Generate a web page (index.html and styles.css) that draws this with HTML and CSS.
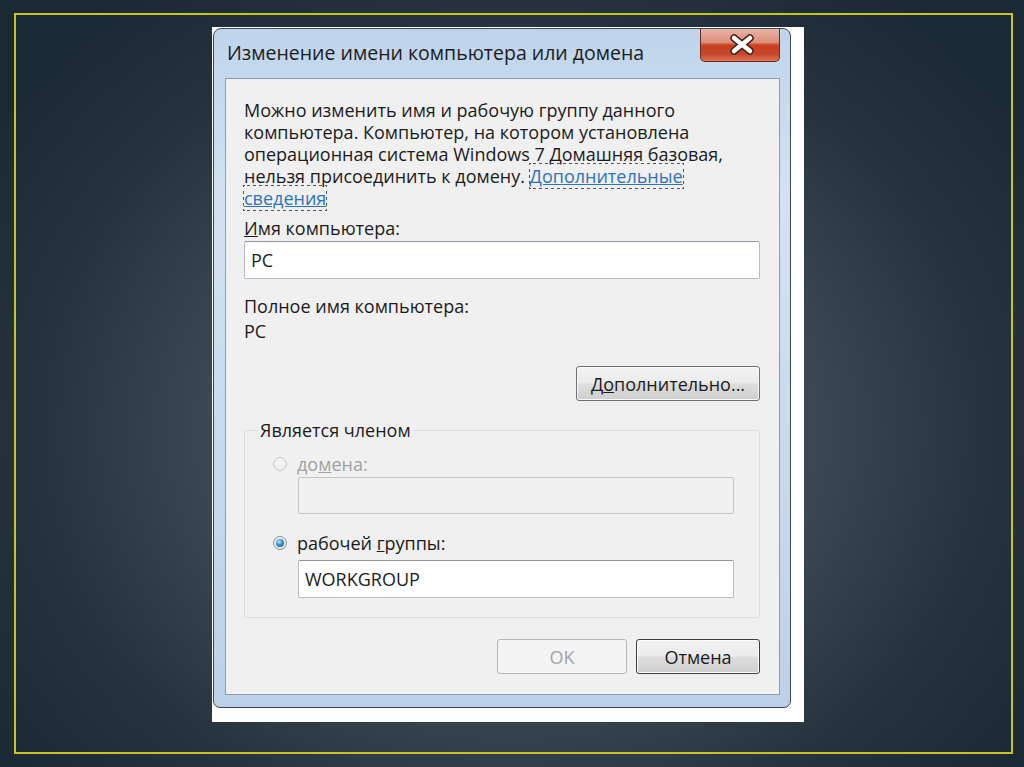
FILE: index.html
```html
<!DOCTYPE html>
<html lang="ru">
<head>
<meta charset="utf-8">
<title>Изменение имени компьютера или домена</title>
<link rel="stylesheet" href="styles.css">
</head>
<body>
<div class="frame">
  <div class="shot">
    <div class="window">
      <div class="titlebar">
        <div class="title">Изменение имени компьютера или домена</div>
        <div class="close">
          <svg width="80" height="33" viewBox="0 0 80 33">
            <path d="M34 10 L50 23 M50 10 L34 23" stroke="#4a1d15" stroke-width="7.5" stroke-linecap="round" fill="none"/>
            <path d="M34 10 L50 23 M50 10 L34 23" stroke="#ffffff" stroke-width="4.5" stroke-linecap="round" fill="none"/>
          </svg>
        </div>
      </div>
      <div class="content">
        <p class="para">Можно изменить имя и рабочую группу данного<br>компьютера. Компьютер, на котором установлена<br>операционная система Windows 7 Домашняя базовая,<br>нельзя присоединить к домену. <a class="link">Дополнительные<br>сведения</a></p>
        <div class="label gap-s"><u>И</u>мя компьютера:</div>
        <div class="input">PC</div>
        <div class="label gap-m">Полное имя компьютера:</div>
        <div class="label gap-xs">PC</div>
        <div class="row-right gap-l">
          <button class="btn btn-more">Д<u>о</u>полнительно...</button>
        </div>
        <fieldset class="group">
          <legend class="legend">Является членом</legend>
          <div class="opt disabled"><span class="radio"></span><span>до<u>м</u>ена:</span></div>
          <div class="input input-off"></div>
          <div class="opt opt-2"><span class="radio on"></span><span>рабочей <u>г</u>руппы:</span></div>
          <div class="input input-wg">WORKGROUP</div>
        </fieldset>
        <div class="row-right actions">
          <button class="btn btn-ok" disabled>OK</button>
          <button class="btn btn-cancel">Отмена</button>
        </div>
      </div>
    </div>
  </div>
</div>
</body>
</html>
```
FILE: styles.css
```css
html, body { margin: 0; padding: 0; }
body {
  width: 1024px;
  height: 767px;
  overflow: hidden;
  background: radial-gradient(ellipse 62% 72% at 50% 56%, #4e5965 0%, #3d4955 45%, #26333f 75%, #1b2935 100%);
  font-family: "Open Sans", "Noto Sans", sans-serif;
}
.frame {
  box-sizing: border-box;
  margin: 13px 0 0 14px;
  width: 999px;
  height: 741px;
  border: 2px solid #c9c31f;
  padding: 12px 0 0 196px;
}
.shot {
  box-sizing: border-box;
  width: 592px;
  height: 695px;
  background: #ffffff;
  padding: 1px 0 0 1px;
}
.window {
  box-sizing: border-box;
  width: 578px;
  height: 680px;
  border: 1px solid #3c4652;
  border-radius: 8px 8px 7px 7px;
  background: linear-gradient(180deg, #bfd4eb 0%, #d2e2f3 25%, #c8daee 60%, #bcd1e8 100%);
  display: flex;
  flex-direction: column;
  padding: 0 10px 12px 11px;
}
.titlebar {
  height: 49px;
  display: flex;
  justify-content: space-between;
  align-items: flex-start;
  padding-left: 2px;
}
.title {
  line-height: 48px;
  font-size: 19.5px;
  color: #1c1c1c;
  white-space: nowrap;
}
.close {
  box-sizing: border-box;
  width: 80px;
  height: 33px;
  border: 1px solid #6b2a20;
  border-top: none;
  border-radius: 0 0 5px 5px;
  background: linear-gradient(180deg, #e9b4a8 0%, #dc8d79 42%, #c8401f 50%, #c6462a 78%, #dd7556 100%);
  overflow: hidden;
}
.close svg { display: block; margin: -1px 0 0 -1px; }
.content {
  flex: 1;
  box-sizing: border-box;
  border: 1px solid #8a9db2;
  background: #f0f0f0;
  padding: 20px 19px 0 18px;
  color: #1b1b1b;
  font-size: 18px;
}
.para {
  margin: 0;
  line-height: 22px;
  white-space: nowrap;
}
.link {
  color: #2f72bd;
  text-decoration: underline;
  outline: 1px dotted #555;
}
.label {
  line-height: 22px;
  white-space: nowrap;
}
.gap-xs { margin-top: 3px; }
.gap-s { margin-top: 8px; }
.gap-m { margin-top: 16px; }
.gap-l { margin-top: 24px; }
.input {
  box-sizing: border-box;
  height: 38px;
  margin-top: 2px;
  border: 1px solid #b5bcc4;
  border-top-color: #8e959e;
  border-radius: 2px;
  background: #ffffff;
  padding-left: 6px;
  line-height: 36px;
}
.row-right {
  display: flex;
  justify-content: flex-end;
  gap: 9px;
}
.actions { margin-top: 21px; }
.btn {
  box-sizing: border-box;
  height: 35px;
  border: 1px solid #707070;
  border-radius: 3px;
  background: linear-gradient(180deg, #f3f3f3 0%, #ebebeb 48%, #dddddd 52%, #cfcfcf 100%);
  box-shadow: inset 0 0 0 1px #fbfbfb;
  font-family: inherit;
  font-size: 18px;
  color: #1b1b1b;
  padding: 0;
}
.btn-more { width: 184px; }
.btn-ok {
  width: 130px;
  border-color: #b3b6b8;
  background: #f4f4f4;
  box-shadow: none;
  color: #a3a3a3;
}
.btn-cancel { width: 124px; border-color: #3e3e3e; }
.group {
  margin: 18px 0 0;
  padding: 12px 24px 19px 28px;
  border: 1px solid #d7dde3;
  border-radius: 3px;
  min-inline-size: auto;
}
.legend {
  margin-left: -15px;
  padding: 0 2px;
  line-height: 22px;
}
.opt {
  display: flex;
  align-items: center;
  gap: 10px;
  line-height: 22px;
}
.opt.disabled { color: #a2a2a2; }
.opt-2 { margin-top: 18px; }
.radio {
  box-sizing: border-box;
  width: 14px;
  height: 14px;
  border-radius: 50%;
  border: 1px solid #8d9094;
  background: radial-gradient(circle at 50% 40%, #f6f6f6 0%, #dcdcdc 100%);
  display: flex;
  align-items: center;
  justify-content: center;
}
.opt.disabled .radio {
  border-color: #cacaca;
  background: radial-gradient(circle at 50% 40%, #f7f7f7 0%, #e6e6e6 100%);
}
.radio.on::after {
  content: "";
  width: 8px;
  height: 8px;
  border-radius: 50%;
  background: radial-gradient(circle at 40% 35%, #bfe8fb 0%, #3592cf 45%, #0e4a80 100%);
}
.input-off {
  width: 436px;
  margin-left: 25px;
  height: 37px;
  background: #f0f0f0;
  border-color: #c4c4c4;
}
.input-wg {
  width: 436px;
  margin-left: 25px;
  margin-top: 6px;
}
```
